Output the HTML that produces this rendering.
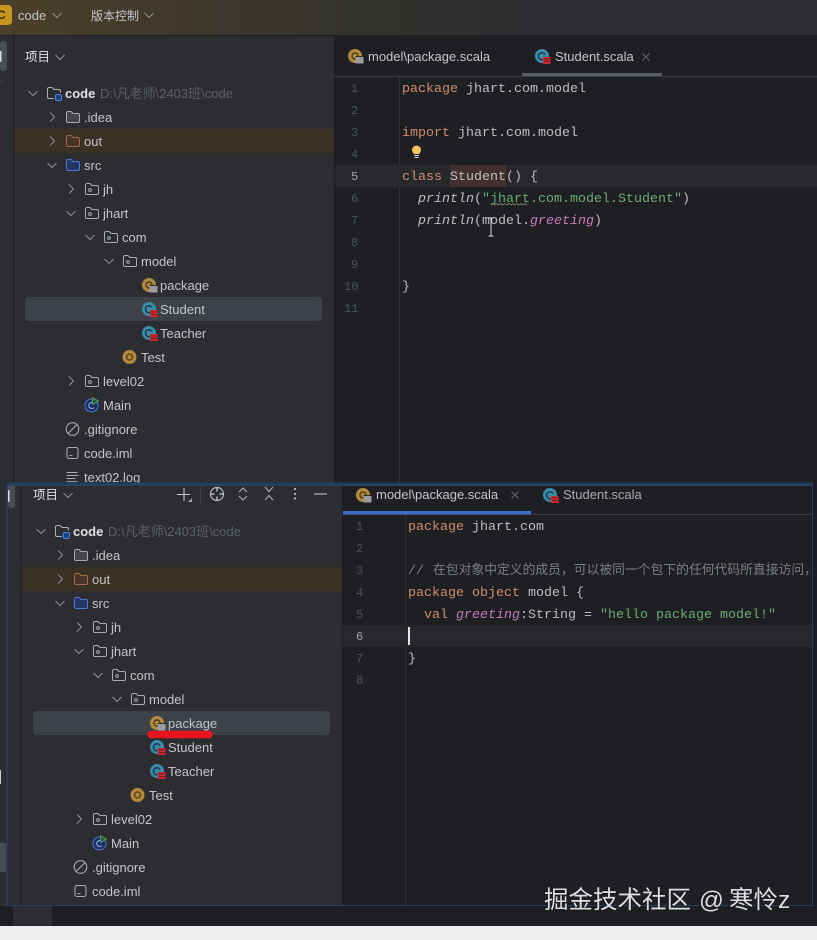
<!DOCTYPE html>
<html lang="zh"><head><meta charset="utf-8"><title>code</title>
<style>
html,body{margin:0;padding:0;background:#1e1f22;width:817px;height:940px;overflow:hidden}
svg{display:block;filter:blur(.35px)}
text{font-family:"Liberation Sans","Noto Sans CJK SC",sans-serif;font-size:13px;fill:#c3c5ca}
.m{font-family:"Liberation Mono","Noto Sans CJK SC",monospace;font-size:13.33px;fill:#bcbec4;white-space:pre}
.k{fill:#cf8e6d}.s{fill:#6aab73}.p{fill:#c77dbb;font-style:italic}.i{font-style:italic}
.n{font-family:"Liberation Mono",monospace;font-size:12px;fill:#4b5059}
.d{fill:#5c5f65}
.h{font-size:12.5px;fill:#dfe1e5}
</style></head><body>
<svg xmlns="http://www.w3.org/2000/svg" width="817" height="940" viewBox="0 0 817 940">
<defs>
<linearGradient id="tb" x1="0" x2="1" y1="0" y2="0"><stop offset="0" stop-color="#4a3f2a"/><stop offset=".35" stop-color="#38352d"/><stop offset=".65" stop-color="#2c2d30"/><stop offset="1" stop-color="#2b2d30"/></linearGradient>
<linearGradient id="gl" x1="0" x2="0" y1="0" y2="1"><stop offset="0" stop-color="#223555" stop-opacity="0"/><stop offset="1" stop-color="#263f66"/></linearGradient>
<symbol id="cr" width="12" height="12" viewBox="0 0 12 12"><path d="M4 1.500 8.500 6 4 10.500" fill="none" stroke="#8d9095" stroke-width="1"/></symbol>
<symbol id="cd" width="12" height="12" viewBox="0 0 12 12"><path d="M1.500 4 6 8.500 10.500 4" fill="none" stroke="#8d9095" stroke-width="1"/></symbol>
<symbol id="f" width="16" height="16" viewBox="0 0 16 16"><path d="M1.500 4a1.500 1.500 0 0 1 1.500-1.500h3l2 2h5a1.500 1.500 0 0 1 1.500 1.500v6a1.500 1.500 0 0 1-1.500 1.500H3A1.500 1.500 0 0 1 1.500 12z" fill="#43454a" stroke="#a8abb0" stroke-width="1"/></symbol>
<symbol id="fo" width="16" height="16" viewBox="0 0 16 16"><path d="M1.500 4a1.500 1.500 0 0 1 1.500-1.500h3l2 2h5a1.500 1.500 0 0 1 1.500 1.500v6a1.500 1.500 0 0 1-1.500 1.500H3A1.500 1.500 0 0 1 1.500 12z" fill="#4a3428" stroke="#a06a50" stroke-width="1"/></symbol>
<symbol id="fs" width="16" height="16" viewBox="0 0 16 16"><path d="M1.500 4a1.500 1.500 0 0 1 1.500-1.500h3l2 2h5a1.500 1.500 0 0 1 1.500 1.500v6a1.500 1.500 0 0 1-1.500 1.500H3A1.500 1.500 0 0 1 1.500 12z" fill="#243764" stroke="#4a78d8" stroke-width="1"/></symbol>
<symbol id="pk" width="16" height="16" viewBox="0 0 16 16"><path d="M1.500 4a1.500 1.500 0 0 1 1.500-1.500h3l2 2h5a1.500 1.500 0 0 1 1.500 1.500v6a1.500 1.500 0 0 1-1.500 1.500H3A1.500 1.500 0 0 1 1.500 12z" fill="none" stroke="#a8abb0" stroke-width="1"/><circle cx="6" cy="9" r="1.400" fill="none" stroke="#a8abb0"/></symbol>
<symbol id="mod" width="17" height="17" viewBox="0 0 17 17"><path d="M1.500 4a1.500 1.500 0 0 1 1.500-1.500h3l2 2h5a1.500 1.500 0 0 1 1.500 1.500v1.500M8 13.500H3A1.500 1.500 0 0 1 1.500 12V4" fill="#2b2d30" stroke="#b0b3b8"/><rect x="9.500" y="9.500" width="6" height="6" rx="1.500" fill="#1f3f80" stroke="#4a84e8"/></symbol>
<symbol id="ob" width="17" height="17" viewBox="0 0 17 17"><circle cx="8" cy="8" r="7" fill="#b3893c"/><circle cx="8" cy="8" r="3" fill="none" stroke="#4a3a20" stroke-width="1.400"/><rect x="8.500" y="8.500" width="8" height="7" fill="#9a9ca0"/><path d="M8.500 8.500h8" stroke="#2b2d30"/></symbol>
<symbol id="cl" width="17" height="17" viewBox="0 0 17 17"><circle cx="8" cy="8" r="7" fill="#3a8bab"/><path d="M11 6.500A3.500 3.500 0 1 0 11 10" fill="none" stroke="#1d3d4c" stroke-width="1.500"/><rect x="9" y="9" width="7.500" height="7" fill="#cc2a2f"/><path d="M10 11h5.500M10 13.500h5.500" stroke="#7a1518"/></symbol>
<symbol id="ts" width="16" height="16" viewBox="0 0 16 16"><circle cx="7.500" cy="8" r="7" fill="#b3893c"/><circle cx="7.500" cy="8" r="3" fill="none" stroke="#5a4420" stroke-width="1.500"/></symbol>
<symbol id="mn" width="16" height="16" viewBox="0 0 16 16"><circle cx="7.500" cy="8.500" r="6.500" fill="#1d2f5c" stroke="#4a78d8"/><path d="M10 6.500A3 3 0 1 0 10 10.500" fill="none" stroke="#7aa0e8" stroke-width="1.200"/><path d="M8.500 .8 14.500 4 8.500 7.500z" fill="#2b5a3a" stroke="#5aa06a" stroke-width=".9"/></symbol>
<symbol id="gi" width="16" height="16" viewBox="0 0 16 16"><circle cx="7.500" cy="8" r="6.300" fill="none" stroke="#a8abb0" stroke-width="1.100"/><path d="M3.200 12.400 11.800 3.600" stroke="#a8abb0" stroke-width="1.100"/></symbol>
<symbol id="im" width="16" height="16" viewBox="0 0 16 16"><rect x="2" y="2.500" width="11" height="11" rx="2" fill="none" stroke="#a8abb0" stroke-width="1.100"/><path d="M4.500 10.500h3" stroke="#a8abb0"/></symbol>
<symbol id="lg" width="16" height="16" viewBox="0 0 16 16"><path d="M1.500 3.500h11M1.500 6.500h12M1.500 9.500h9M1.500 12.500h11" stroke="#a8abb0" fill="none"/></symbol>
<symbol id="x" width="10" height="10" viewBox="0 0 10 10"><path d="M1.500 1.500 8.500 8.500M8.500 1.500 1.500 8.500" stroke="#63666c" stroke-width="1"/></symbol>
<clipPath id="ct"><rect x="0" y="0" width="817" height="484"/></clipPath>
<clipPath id="cb"><rect x="8" y="486" width="804" height="419"/></clipPath>
</defs>

<!-- TOP WINDOW -->
<g clip-path="url(#ct)">
<rect width="817" height="484" fill="#1e1f22"/>
<rect width="817" height="35" fill="url(#tb)"/>
<rect y="35" width="817" height="1" fill="#1e1f22"/>
<rect x="-6" y="5" width="18" height="20" rx="4" fill="#c8951f"/>
<text x="-3" y="19" style="font-size:12px;fill:#3a2a08;font-weight:bold">C</text>
<text x="18" y="20">code</text><use href="#cd" x="51" y="9"/>
<text x="91" y="20" style="font-size:12px">版本控制</text><use href="#cd" x="143" y="9"/>
<rect y="36" width="13" height="448" fill="#2b2d30"/>
<rect x="0" y="41" width="7" height="30" rx="3" fill="#4a4d52"/>
<rect x="0" y="51" width="1.500" height="11" fill="#d8dade"/>
<rect x="0" y="81" width="4" height="1" fill="#3c3e43"/>
<rect x="13" y="36" width="321" height="448" fill="#2b2d30"/>
<rect x="13" y="36" width="1" height="448" fill="#1c1d20"/>
<rect x="334" y="36" width="1" height="448" fill="#1c1d20"/>
<rect x="334" y="76" width="483" height="1" fill="#393b40"/>
<text x="25" y="61" class="h">项目</text><use href="#cd" x="54" y="51"/>
<rect x="14" y="129" width="320" height="24" fill="#3a3024"/>
<rect x="25" y="297" width="297" height="24" rx="4" fill="#3e4248"/>
<use href="#cd" x="27" y="87"/><use href="#mod" x="46" y="85"/><text x="65" y="98" style="font-weight:bold;fill:#dfe1e5">code</text><text x="100" y="98" class="d">D:\凡老师\2403班\code</text>
<use href="#cr" x="46" y="111"/><use href="#f" x="65" y="109"/><text x="84" y="122">.idea</text>
<use href="#cr" x="46" y="135"/><use href="#fo" x="65" y="133"/><text x="84" y="146">out</text>
<use href="#cd" x="46" y="159"/><use href="#fs" x="65" y="157"/><text x="84" y="170">src</text>
<use href="#cr" x="65" y="183"/><use href="#pk" x="84" y="181"/><text x="103" y="194">jh</text>
<use href="#cd" x="65" y="207"/><use href="#pk" x="84" y="205"/><text x="103" y="218">jhart</text>
<use href="#cd" x="84" y="231"/><use href="#pk" x="103" y="229"/><text x="122" y="242">com</text>
<use href="#cd" x="103" y="255"/><use href="#pk" x="122" y="253"/><text x="141" y="266">model</text>
<use href="#ob" x="141" y="277"/><text x="160" y="290">package</text>
<use href="#cl" x="141" y="301"/><text x="160" y="314">Student</text>
<use href="#cl" x="141" y="325"/><text x="160" y="338">Teacher</text>
<use href="#ts" x="122" y="349"/><text x="141" y="362">Test</text>
<use href="#cr" x="65" y="375"/><use href="#pk" x="84" y="373"/><text x="103" y="386">level02</text>
<use href="#mn" x="84" y="397"/><text x="103" y="410">Main</text>
<use href="#gi" x="65" y="421"/><text x="84" y="434">.gitignore</text>
<use href="#im" x="65" y="445"/><text x="84" y="458">code.iml</text>
<use href="#lg" x="65" y="469"/><text x="84" y="482">text02.log</text>

<use href="#ob" x="347" y="48"/><text x="368" y="61">model\package.scala</text>
<use href="#cl" x="534" y="48"/><text x="555" y="61">Student.scala</text><use href="#x" x="641" y="52"/>
<rect x="522" y="73" width="140" height="3" fill="#5a5d62"/>
<rect x="399" y="77" width="1" height="407" fill="#2f3136"/>
<rect x="335" y="165" width="482" height="22" fill="#26282c"/>
<rect x="450" y="165" width="56" height="22" fill="#432f30"/>
<g>
<text class="n" x="351" y="92">1</text><text class="n" x="351" y="114">2</text><text class="n" x="351" y="136">3</text><text class="n" x="351" y="158">4</text><text class="n" x="351" y="180" style="fill:#a1a3ab">5</text><text class="n" x="351" y="202">6</text><text class="n" x="351" y="224">7</text><text class="n" x="351" y="246">8</text><text class="n" x="351" y="268">9</text><text class="n" x="344" y="290">10</text><text class="n" x="344" y="312">11</text>
</g>
<text class="m" x="402" y="92"><tspan class="k">package</tspan> jhart.com.model</text>
<text class="m" x="402" y="136"><tspan class="k">import</tspan> jhart.com.model</text>
<path d="M412 150a4.500 4.500 0 1 1 9 0c0 2-1.500 2.500-1.500 4h-6c0-1.500-1.500-2-1.500-4z" fill="#f2c55c"/><path d="M414 155.500h5M414.500 157.500h4" stroke="#d8dade"/>
<text class="m" x="402" y="180"><tspan class="k">class</tspan> Student() {</text>
<text class="m" x="418" y="202"><tspan class="i">println</tspan>(<tspan class="s">"jhart.com.model.Student"</tspan>)</text>
<text class="m" x="418" y="224"><tspan class="i">println</tspan>(model.<tspan class="p">greeting</tspan>)</text>
<text class="m" x="402" y="290">}</text>
<path d="M491 205l2-1.500 2 1.500 2-1.500 2 1.500 2-1.500 2 1.500 2-1.500 2 1.500 2-1.500 2 1.500 2-1.500 2 1.500 2-1.500 2 1.500 2-1.500 2 1.500 2-1.500 2 1.500" fill="none" stroke="#7a8a6a" stroke-width=".8"/>
<path d="M488.500 218h5M488.500 236h5M491 218v18" stroke="#d8dade" fill="none"/>
</g>

<!-- BOTTOM BACKGROUND -->
<rect y="905" width="817" height="21" fill="#1c1e22"/>
<rect x="13" y="905" width="39" height="21" fill="#2b2d30"/>
<rect y="926" width="817" height="14" fill="#efefef"/>
<rect x="0" y="484" width="7" height="422" fill="#2b2d30"/>
<rect x="0" y="843" width="6" height="29" fill="#4a4d52"/>
<rect x="0" y="770" width="1" height="14" fill="#c8cacf"/>
<rect x="813" y="484" width="4" height="422" fill="#1b1d21"/>

<!-- BOTTOM WINDOW -->
<rect x="7" y="481" width="806" height="3" fill="url(#gl)"/>
<rect x="6.500" y="484" width="806.500" height="422" fill="#263f66"/>
<g clip-path="url(#cb)">
<rect x="8" y="486" width="804" height="419" fill="#1e1f22"/>
<rect x="8" y="486" width="13" height="419" fill="#2b2d30"/>
<rect x="8" y="484" width="7" height="24" rx="3" fill="#4a4d52"/>
<rect x="8" y="490" width="1.500" height="12" fill="#d8dade"/>
<rect x="21" y="486" width="321" height="419" fill="#2b2d30"/>
<rect x="20.500" y="486" width="1" height="419" fill="#1c1d20"/>
<rect x="342" y="486" width="1" height="419" fill="#1c1d20"/>
<text x="33" y="499" class="h">项目</text><use href="#cd" x="62" y="489"/>
<path d="M177 494.500h13M184 488v13" stroke="#c3c5ca" fill="none" stroke-width="1.100"/><path d="M192 498v4h-4z" fill="#a0a3a8"/>
<rect x="200" y="484" width="1" height="20" fill="#3c3e43"/>
<circle cx="217" cy="494" r="6.500" fill="none" stroke="#b5b8bd" stroke-width="1.200"/><path d="M217 487v4.500M217 496.500v4.500M210 494h4.500M219.500 494h4.500" stroke="#b5b8bd" stroke-width="1.500"/>
<path d="M239 492l4-4 4 4M239 496l4 4 4-4" fill="none" stroke="#a8abb0" stroke-width="1.100"/>
<path d="M265 487l4 4.500 4-4.500M265 500l4-4.500 4 4.500" fill="none" stroke="#a8abb0" stroke-width="1.100"/>
<circle cx="295" cy="489" r="1.100" fill="#b5b8bd"/><circle cx="295" cy="494" r="1.100" fill="#b5b8bd"/><circle cx="295" cy="498.500" r="1.100" fill="#b5b8bd"/>
<path d="M314 494h13" stroke="#a8abb0" stroke-width="1.300"/>
<rect x="22" y="567" width="320" height="24" fill="#3a3024"/>
<rect x="33" y="711" width="297" height="24" rx="4" fill="#3e4248"/>
<use href="#cd" x="35" y="525"/><use href="#mod" x="54" y="523"/><text x="73" y="536" style="font-weight:bold;fill:#dfe1e5">code</text><text x="108" y="536" class="d">D:\凡老师\2403班\code</text>
<use href="#cr" x="54" y="549"/><use href="#f" x="73" y="547"/><text x="92" y="560">.idea</text>
<use href="#cr" x="54" y="573"/><use href="#fo" x="73" y="571"/><text x="92" y="584">out</text>
<use href="#cd" x="54" y="597"/><use href="#fs" x="73" y="595"/><text x="92" y="608">src</text>
<use href="#cr" x="73" y="621"/><use href="#pk" x="92" y="619"/><text x="111" y="632">jh</text>
<use href="#cd" x="73" y="645"/><use href="#pk" x="92" y="643"/><text x="111" y="656">jhart</text>
<use href="#cd" x="92" y="669"/><use href="#pk" x="111" y="667"/><text x="130" y="680">com</text>
<use href="#cd" x="111" y="693"/><use href="#pk" x="130" y="691"/><text x="149" y="704">model</text>
<use href="#ob" x="149" y="715"/><text x="168" y="728">package</text>
<use href="#cl" x="149" y="739"/><text x="168" y="752">Student</text>
<use href="#cl" x="149" y="763"/><text x="168" y="776">Teacher</text>
<use href="#ts" x="130" y="787"/><text x="149" y="800">Test</text>
<use href="#cr" x="73" y="813"/><use href="#pk" x="92" y="811"/><text x="111" y="824">level02</text>
<use href="#mn" x="92" y="835"/><text x="111" y="848">Main</text>
<use href="#gi" x="73" y="859"/><text x="92" y="872">.gitignore</text>
<use href="#im" x="73" y="883"/><text x="92" y="896">code.iml</text>
<path d="M151 734.500H209" stroke="#e8141f" stroke-width="7.500" stroke-linecap="round"/>

<rect x="343" y="514" width="470" height="1" fill="#393b40"/>
<use href="#ob" x="355" y="487"/><text x="376" y="499">model\package.scala</text><use href="#x" x="510" y="490"/>
<use href="#cl" x="542" y="487"/><text x="563" y="499" style="fill:#a8abb0">Student.scala</text>
<rect x="343" y="511" width="188" height="3.500" fill="#3f6cc9"/>
<rect x="405" y="515" width="1" height="390" fill="#2f3136"/>
<rect x="343" y="625" width="470" height="22" fill="#26282c"/>
<text class="n" x="356" y="530">1</text><text class="n" x="356" y="552">2</text><text class="n" x="356" y="574">3</text><text class="n" x="356" y="596">4</text><text class="n" x="356" y="618">5</text><text class="n" x="356" y="640" style="fill:#a1a3ab">6</text><text class="n" x="356" y="662">7</text><text class="n" x="356" y="684">8</text>
<text class="m" x="408" y="530"><tspan class="k">package</tspan> jhart.com</text>
<text class="m" x="408" y="574" style="fill:#7a7e85">//</text>
<text x="433" y="574" style="font-size:12.8px;fill:#7a7e85;font-family:'Noto Sans CJK SC',sans-serif">在包对象中定义的成员，可以被同一个包下的任何代码所直接访问，</text>
<text class="m" x="408" y="596"><tspan class="k">package object</tspan> model {</text>
<text class="m" x="424" y="618"><tspan class="k">val</tspan> <tspan class="p">greeting</tspan>:String = <tspan class="s">"hello package model!"</tspan></text>
<rect x="408" y="627" width="2" height="18" fill="#e8e8e8"/>
<text class="m" x="408" y="662">}</text>
</g>

<!-- WATERMARK -->
<text x="544" y="908" style="font-size:24.500px;fill:#dcdee3;font-family:'Noto Sans CJK SC',sans-serif;paint-order:stroke;stroke:#1a1c20;stroke-width:2px">掘金技术社区</text>
<text x="699" y="908" style="font-size:24.500px;fill:#dcdee3;font-family:'Liberation Sans',sans-serif;paint-order:stroke;stroke:#1a1c20;stroke-width:2px">@</text>
<text x="729" y="908" style="font-size:24.500px;fill:#dcdee3;font-family:'Noto Sans CJK SC',sans-serif;paint-order:stroke;stroke:#1a1c20;stroke-width:2px">寒怜</text>
<text x="778" y="908" style="font-size:24.500px;fill:#dcdee3;font-family:'Liberation Sans',sans-serif;paint-order:stroke;stroke:#1a1c20;stroke-width:2px">z</text>
</svg>
</body></html>
